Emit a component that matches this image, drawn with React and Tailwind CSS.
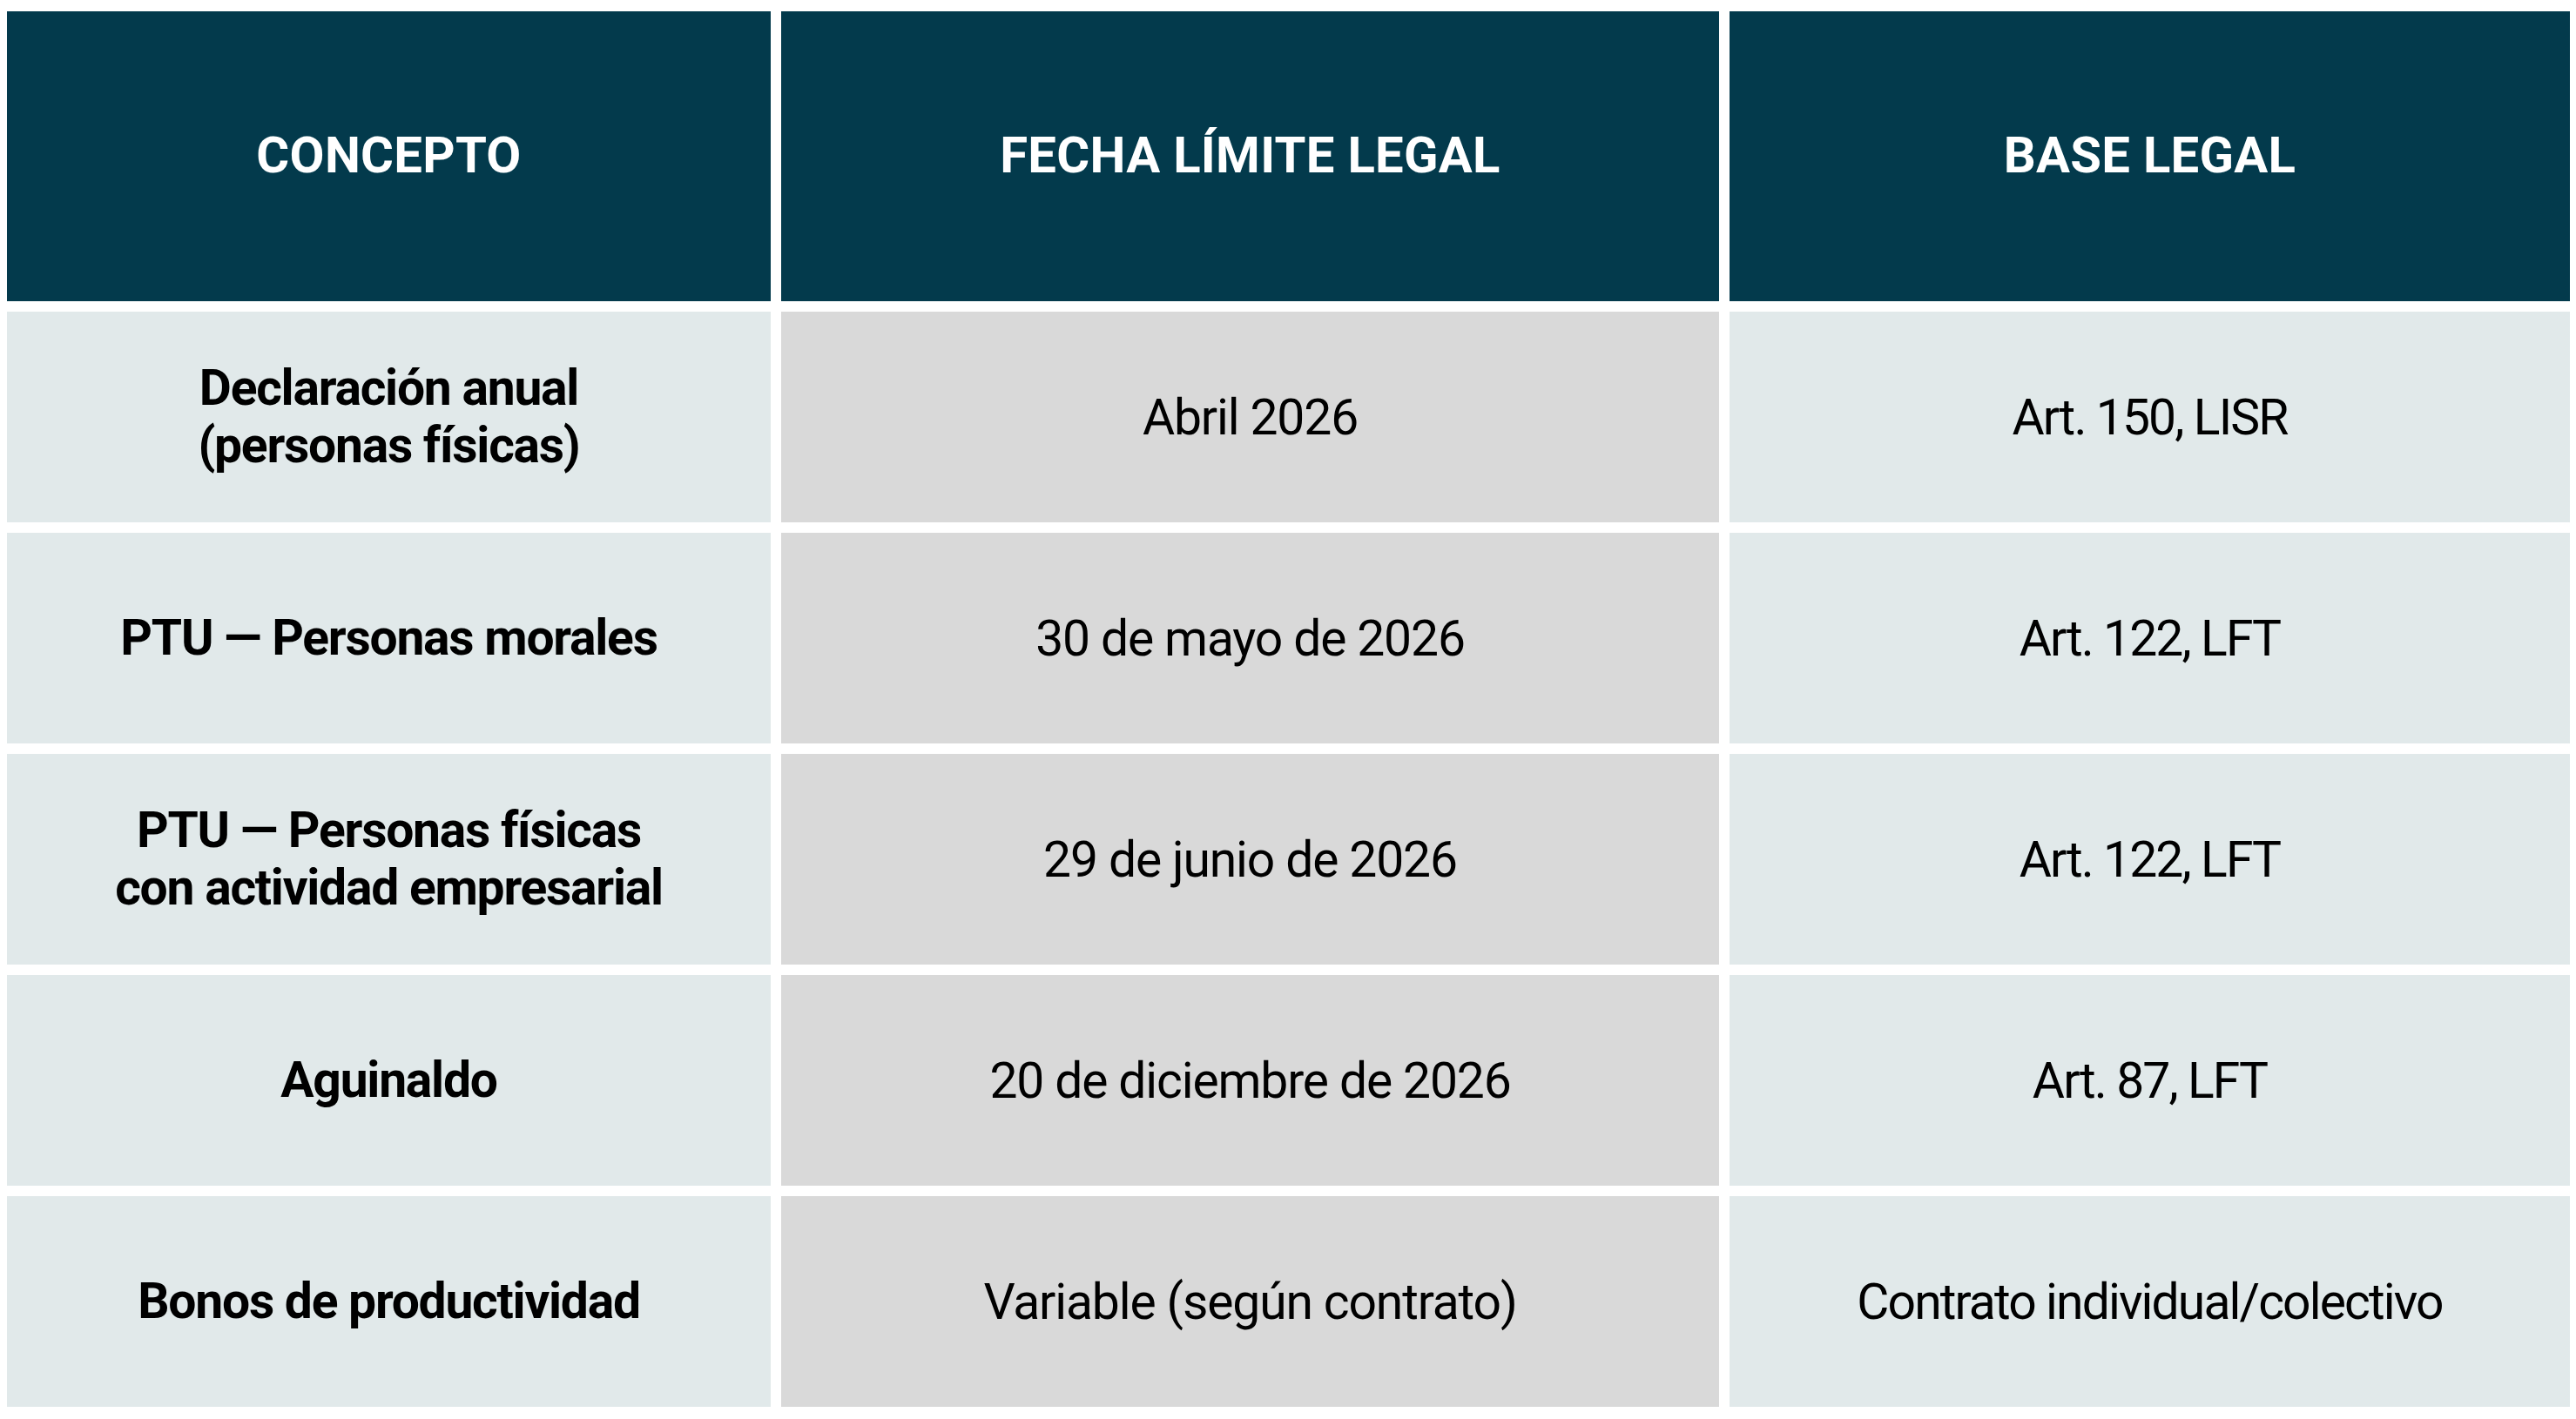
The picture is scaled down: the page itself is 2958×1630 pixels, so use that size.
import React from "react";

const rows = [
  ["Declaración anual\n(personas físicas)", "Abril 2026", "Art. 150, LISR"],
  ["PTU — Personas morales", "30 de mayo de 2026", "Art. 122, LFT"],
  ["PTU — Personas físicas\ncon actividad empresarial", "29 de junio de 2026", "Art. 122, LFT"],
  ["Aguinaldo", "20 de diciembre de 2026", "Art. 87, LFT"],
  ["Bonos de productividad", "Variable (según contrato)", "Contrato individual/colectivo"],
];

export default function App() {
  return (
    <div className="w-[2958px] h-[1630px] bg-white pl-[8px] pt-[13px]" style={{ fontFamily: "Roboto, 'Noto Sans', sans-serif" }}>
      <div className="grid grid-cols-[877px_1077px_965px] grid-rows-[333px_repeat(5,242px)] gap-x-[12px] gap-y-[12px]">
        {["CONCEPTO", "FECHA LÍMITE LEGAL", "BASE LEGAL"].map((h) => (
          <div key={h} className="bg-[#033a4c] flex items-center justify-center pb-[3px] text-white font-bold text-[58px] tracking-[0.005em] leading-none">
            {h}
          </div>
        ))}
        {rows.map((r, i) => (
          <React.Fragment key={i}>
            <div className="bg-[#e1e9ea] flex items-center justify-center text-center text-black font-bold text-[57px] tracking-[-0.022em] leading-[66px] whitespace-pre-line">
              {r[0]}
            </div>
            <div className="bg-[#d9d9d9] flex items-center justify-center text-center text-black text-[57px] tracking-[-0.02em] leading-none">
              {r[1]}
            </div>
            <div className="bg-[#e1e9ea] flex items-center justify-center text-center text-black text-[57px] tracking-[-0.033em] leading-none">
              {r[2]}
            </div>
          </React.Fragment>
        ))}
      </div>
    </div>
  );
}
